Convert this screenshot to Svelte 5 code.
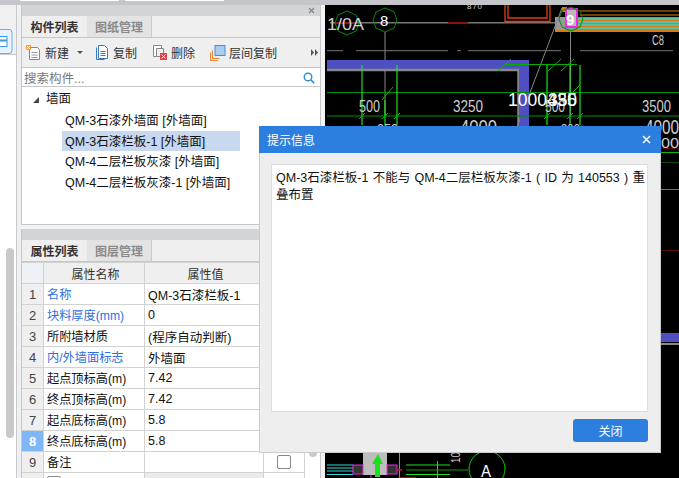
<script lang="ts">
  const tree = ['QM-3石漆外墙面 [外墙面]', 'QM-3石漆栏板-1 [外墙面]', 'QM-4二层栏板灰漆 [外墙面]', 'QM-4二层栏板灰漆-1 [外墙面]'];
  const rows = [
    { name: '名称', value: 'QM-3石漆栏板-1', link: true },
    { name: '块料厚度(mm)', value: '0', link: true },
    { name: '所附墙材质', value: '(程序自动判断)' },
    { name: '内/外墙面标志', value: '外墙面', link: true },
    { name: '起点顶标高(m)', value: '7.42' },
    { name: '终点顶标高(m)', value: '7.42' },
    { name: '起点底标高(m)', value: '5.8' },
    { name: '终点底标高(m)', value: '5.8', active: true },
    { name: '备注', value: '', check: true }
  ];
</script>

<div class="app">
  <div class="top"><i></i><i></i></div>
  <div class="work">
    <aside class="side">
      <div class="side-tab">
        <svg width="13" height="25" viewBox="0 0 13 25"><rect x="-5" y="0.500" width="17" height="24" rx="3" fill="#e6f2fd" stroke="#66aef0"/><rect x="-1" y="7.500" width="8" height="10" fill="#fff" stroke="#3f97e2"/><path d="M-1 11.500h8" stroke="#3f97e2" stroke-width="2"/></svg>
      </div>
      <div class="side-rail"><div class="rail-thumb"></div></div>
    </aside>

    <main class="panels">
      <section class="panel list">
        <div class="strip">
          <svg width="7" height="7" viewBox="0 0 7 7"><path d="M1 1l5 5M6 1l-5 5" stroke="#888" stroke-width="1.300"/></svg>
        </div>
        <div class="tabs">
          <span class="tab on">构件列表</span><span class="tab">图纸管理</span>
        </div>
        <div class="tools">
          <span class="tool">
            <svg width="16" height="16" viewBox="0 0 16 16"><path d="M3.500 2.500h8l2 2v10h-10z" fill="#fff" stroke="#888"/><path d="M5.500 7.500h6M5.500 10h6M5.500 12.500h6" stroke="#999"/><rect x="0" y="0" width="5" height="5" fill="#f5a33c"/><path d="M1 1l3 3M4 1l-3 3" stroke="#fff"/></svg>
            新建
          </span>
          <span class="caret"></span>
          <span class="tool">
            <svg width="15" height="16" viewBox="0 0 15 16"><path d="M1.500 2.500v12h8" fill="none" stroke="#3b78b8"/><path d="M3.500 0.500h6l3 3v10h-9z" fill="#fff" stroke="#3b78b8"/><path d="M5.500 6.500h5M5.500 8.500h5M5.500 10.500h5" stroke="#3b78b8"/></svg>
            复制
          </span>
          <span class="tool">
            <svg width="16" height="16" viewBox="0 0 16 16"><path d="M1.500 0.500h8v11h-8z" fill="#fff" stroke="#888"/><path d="M4.500 3.500h7v8h-7z" fill="#eee" stroke="#888"/><rect x="8" y="8" width="7" height="7" fill="#d9434a"/><path d="M9.500 9.500l4 4M13.500 9.500l-4 4" stroke="#fff"/></svg>
            删除
          </span>
          <span class="tool">
            <svg width="16" height="16" viewBox="0 0 16 16"><path d="M0.500 7.500v8h7" fill="none" stroke="#ee8433"/><path d="M2.500 5.500v8h7" fill="none" stroke="#ee8433"/><rect x="5" y="0.500" width="10" height="10" fill="#a9cdf2" stroke="#4a8bd0"/></svg>
            层间复制
          </span>
          <span class="more">
            <svg width="7" height="7" viewBox="0 0 7 7"><path d="M0 0l3 3.500-3 3.500zM4 0l3 3.500-3 3.500z" fill="#555"/></svg>
          </span>
        </div>
        <div class="search">
          <span>搜索构件...</span>
          <svg width="12" height="12" viewBox="0 0 12 12"><circle cx="5" cy="5" r="3.800" fill="none" stroke="#2f8ccf" stroke-width="1.400"/><path d="M8 8l3.200 3.200" stroke="#2f8ccf" stroke-width="1.600"/></svg>
        </div>
        <div class="tree">
          <div class="root"><i class="tri"></i>墙面</div>
          {#each tree as item, i}
            <div class="leaf" class:sel={i === 1}>{item}</div>
          {/each}
        </div>
      </section>

      <section class="panel props">
        <div class="strip"></div>
        <div class="tabs">
          <span class="tab on">属性列表</span><span class="tab">图层管理</span>
        </div>
        <div class="prop-body">
          <table>
            <colgroup><col class="c0" /><col class="c1" /><col class="c2" /><col /></colgroup>
            <thead>
              <tr><th></th><th>属性名称</th><th>属性值</th><th></th></tr>
            </thead>
            <tbody>
              {#each rows as row, i}
                <tr>
                  <td class="num" class:active={row.active}>{i + 1}</td>
                  <td class="name" class:link={row.link}>{row.name}</td>
                  <td>{row.value}</td>
                  <td class="chk">{#if row.check}<span class="box"></span>{/if}</td>
                </tr>
              {/each}
              <tr class="last">
                <td class="num"></td>
                <td><span class="box small"></span></td>
                <td class="grey"></td>
                <td></td>
              </tr>
            </tbody>
          </table>
          <div class="prop-rail"><div class="prop-thumb"></div></div>
        </div>
      </section>
    </main>

    <div class="canvas">
      <svg width="354" height="473" viewBox="325 5 354 473" font-family="'Liberation Sans', sans-serif" fill="#cfcfcf">
        <rect x="325" y="5" width="354" height="473" fill="#000"/>

        <!-- top row: axis bubbles, wall outline, beam -->
        <path d="M330 22.700h225" stroke="#777" stroke-width="1.500"/>
        <path d="M335 22.700h20M448 22.700h20" stroke="#8a1010" stroke-width="1.500"/>
        <path d="M505 5v16.500h45V5M508 5v13h39V5" fill="none" stroke="#e23d12" stroke-width="1.300"/>
        <rect x="555" y="17" width="124" height="15" fill="#d97a12"/>
        <path d="M580 11h99M580 15h99" stroke="#d97a12" stroke-width="1.200"/>
        <path d="M566 19h113M566 22h113M566 25h113M566 28h113" stroke="#2fd8d8" stroke-width="1.600"/>
        <rect x="555" y="17" width="10" height="13" fill="#999"/>
        <rect x="562" y="7" width="5" height="5" fill="#d97a12"/>
        <rect x="566" y="9" width="11" height="18" fill="#b9b9b9" stroke="#e92be0" stroke-width="2"/>
        <polygon points="347,11 356,15 359,23 356,31 347,35 338,31 335,23 338,15" fill="none" stroke="#0a8a0a"/>
        <polygon points="385,8 394,12 397,20 394,28 385,32 376,28 373,20 376,12" fill="none" stroke="#0a8a0a"/>
        <polygon points="571,7 580,11 583,19 580,27 571,31 562,27 559,19 562,11" fill="none" stroke="#0a8a0a"/>
        <path d="M385 32v84M570.500 31v85" stroke="#888"/>
        <path d="M562 8l-45 119" stroke="#888"/>
        <text x="327" y="30" font-size="17" textLength="37" lengthAdjust="spacingAndGlyphs">1/0A</text>
        <text x="380" y="26" font-size="15" fill="#fff">8</text>
        <text x="566" y="25" font-size="15" fill="#fff" font-weight="bold">9</text>
        <text x="652" y="45" font-size="15" textLength="12" lengthAdjust="spacingAndGlyphs">C8</text>
        <text x="467" y="9" font-size="8" textLength="15">870</text>

        <!-- dashed grid line and wall -->
        <path d="M327 50.700h16M356 50.700h92M457 50.700h4M468 50.700h93M570 50.700h1M580 50.700h93" stroke="#777"/>
        <rect x="327" y="60" width="202" height="9" fill="#4e4fc1"/>
        <rect x="520" y="60" width="9" height="70" fill="#4e4fc1"/>
        <path d="M327 70h191.500v60" fill="none" stroke="#888" stroke-width="2.400"/>

        <!-- dimension lines -->
        <path d="M327 92.500h352M327 116h352" stroke="#009000"/>
        <path d="M362 65v60M385 100v25M397 65v60M547 65v60M570 65v60M580 65v60" stroke="#1ee01e" stroke-width="1.200"/>
        <path d="M505 64.500h72" stroke="#00b000"/>
        <path d="M498 71l13-12M548 71l13-12M561 71l13-12M382 100l11-13M571 94l9-9M359 119l6-6M382 119l6-6M394 119l6-6M544 119l6-6M567 119l6-6M577 119l6-6" stroke="#0ab00a"/>
        <text x="359" y="112" font-size="17" textLength="21" lengthAdjust="spacingAndGlyphs">500</text>
        <text x="453" y="112" font-size="17" textLength="30" lengthAdjust="spacingAndGlyphs">3250</text>
        <text x="545" y="112" font-size="17" textLength="20" lengthAdjust="spacingAndGlyphs">500</text>
        <text x="642" y="112" font-size="17" textLength="29" lengthAdjust="spacingAndGlyphs">3500</text>
        <text x="508" y="106" font-size="18" fill="#fff" textLength="39" lengthAdjust="spacingAndGlyphs">1000</text>
        <text x="547" y="106" font-size="18" fill="#fff" textLength="30" lengthAdjust="spacingAndGlyphs">435</text>
        <text x="548" y="106" font-size="18" fill="#fff" textLength="29" lengthAdjust="spacingAndGlyphs">350</text>
        <text x="377" y="134" font-size="15" textLength="21" lengthAdjust="spacingAndGlyphs">350</text>
        <text x="460" y="134" font-size="20" textLength="37" lengthAdjust="spacingAndGlyphs">4000</text>
        <text x="561" y="134" font-size="14" textLength="19" lengthAdjust="spacingAndGlyphs">300</text>
        <text x="645" y="134" font-size="20" textLength="34" lengthAdjust="spacingAndGlyphs">4000</text>

        <!-- right of the dialog -->
        <text x="652" y="148" font-size="14" textLength="27" lengthAdjust="spacingAndGlyphs">000</text>
        <path d="M661 148.500h18" stroke="#5a0c0c"/>
        <path d="M661 152.500h18M661 189.500h18" stroke="#12b012"/>
        <path d="M661 162.500h18" stroke="#0a4a0a"/>
        <path d="M661 250.500h18" stroke="#5a0c0c"/>
        <rect x="661" y="333" width="18" height="9" fill="#4e4fc1"/>
        <rect x="661" y="343" width="18" height="2" fill="#888"/>

        <!-- below the dialog -->
        <rect x="363" y="453" width="24" height="22" fill="#bdbdbd"/>
        <path d="M327 465h26M327 468h26M327 471h26M327 474.500h26" stroke="#2fd8d8"/>
        <rect x="353" y="465" width="10" height="9" fill="#333" stroke="#e92be0"/>
        <rect x="387" y="465" width="10" height="9" fill="#333" stroke="#e92be0"/>
        <path d="M371 475v3" stroke="#e92be0"/>
        <path d="M378 454l5 10h-3v13h-5v-13h-3z" fill="#1de01d"/>
        <path d="M399.500 453v25" stroke="#1de01d"/>
        <path d="M406 465h44M406 474.500h44M437.500 461v17" stroke="#1de01d"/>
        <path d="M406 470h62" stroke="#0a9a0a"/>
        <path d="M397 470h5M398 478h18" stroke="#e01010" stroke-width="1.300"/>
        <text x="460" y="463" font-size="13" transform="rotate(-90 460 463)" textLength="11" lengthAdjust="spacingAndGlyphs">10</text>
        <circle cx="487" cy="469" r="18" fill="none" stroke="#17c317"/>
        <text x="481" y="477" font-size="16" fill="#fff" textLength="10" lengthAdjust="spacingAndGlyphs">A</text>
      </svg>
    </div>
  </div>

  <div class="dialog">
    <header class="dlg-head">
      <span>提示信息</span>
      <svg width="9" height="9" viewBox="0 0 9 9"><path d="M1 1l7 7M8 1l-7 7" stroke="#fff" stroke-width="1.500"/></svg>
    </header>
    <div class="dlg-body">
      <div class="message">QM-3石漆栏板-1 不能与 QM-4二层栏板灰漆-1 ( ID 为 140553 ) 重叠布置</div>
      <footer class="dlg-foot"><button>关闭</button></footer>
    </div>
  </div>
</div>

<style>
  :global(body) {
    margin: 0;
    background: #fff;
  }

  .app {
    position: relative;
    display: flex;
    flex-direction: column;
    width: 679px;
    height: 478px;
    overflow: hidden;
    background: #ececec;
    font: 12.500px "Liberation Sans", "Noto Sans CJK SC", sans-serif;
    color: #111;
  }

  .top {
    height: 5px;
    flex: none;
    display: flex;
    gap: 6px;
    padding-left: 20px;
    background: #c4c6ca;
  }

  .top i {
    width: 99px;
    height: 1px;
    background: #fff;
  }

  .work {
    flex: 1;
    display: flex;
    min-height: 0;
  }

  .side {
    width: 21px;
    flex: none;
    display: flex;
    flex-direction: column;
    background: #f0f0f0;
  }

  .side-tab {
    height: 50px;
    width: 17px;
    padding-top: 24px;
    box-sizing: border-box;
    border-right: 1px solid #c9cacd;
    border-bottom: 1px solid #c9cacd;
    background: #f0f0f0;
  }

  .side-tab svg {
    display: block;
  }

  .side-rail {
    flex: 1;
    width: 17px;
    box-sizing: border-box;
    border-right: 1px solid #c9cacd;
    padding: 193px 0 0 6px;
    background: #fff;
  }

  .rail-thumb {
    width: 8px;
    height: 190px;
    background: #c9c9c9;
    border-radius: 4px;
  }

  .panels {
    width: 304px;
    flex: none;
    display: flex;
    flex-direction: column;
    gap: 4px;
    background: #f4f4f4;
  }

  .panel {
    width: 300px;
    background: #fff;
    border-left: 1px solid #c4c6ca;
    border-right: 1px solid #c4c6ca;
    box-sizing: border-box;
  }

  .list {
    height: 220px;
    flex: none;
    border-bottom: 1px solid #c4c6ca;
    overflow: hidden;
  }

  .props {
    flex: 1;
    min-height: 0;
    overflow: hidden;
  }

  .strip {
    height: 11px;
    background: #d3d4d8;
    display: flex;
    justify-content: flex-end;
    align-items: center;
    padding-right: 5px;
  }

  .tabs {
    display: flex;
    height: 22px;
    box-sizing: border-box;
    background: #efefef;
    border-bottom: 1px solid #c4c6ca;
    font-size: 12px;
  }

  .tab {
    width: 65px;
    box-sizing: border-box;
    line-height: 24px;
    text-align: center;
    color: #8a8a8a;
    background: #e3e3e3;
    border-right: 1px solid #c9cacd;
    font-weight: bold;
  }

  .tab:first-child {
    background: #efefef;
    border-right: 0;
    color: #333;
  }

  .tools {
    height: 30px;
    box-sizing: border-box;
    display: flex;
    align-items: center;
    padding-left: 4px;
    gap: 15px;
    background: #efefef;
    border-bottom: 1px solid #c4c6ca;
    color: #333;
    font-size: 12px;
  }

  .tool {
    display: flex;
    align-items: center;
    gap: 3px;
  }

  .caret {
    width: 0;
    height: 0;
    margin-left: -7px;
    margin-right: -3px;
    border: 3px solid transparent;
    border-top: 3px solid #555;
    border-bottom: 0;
  }

  .more {
    margin-left: auto;
    margin-right: 2px;
    line-height: 0;
  }

  .search {
    height: 19px;
    box-sizing: border-box;
    display: flex;
    align-items: center;
    justify-content: space-between;
    padding: 1px 5px 0 2px;
    color: #777;
    border-bottom: 1px solid #c4c6ca;
  }

  .tree {
    padding-top: 2px;
  }

  .root {
    height: 21px;
    line-height: 21px;
    display: flex;
    align-items: center;
    padding-left: 11px;
    gap: 7px;
  }

  .tri {
    width: 0;
    height: 0;
    border-style: solid;
    border-width: 0 0 6px 6px;
    border-color: transparent transparent #444 transparent;
  }

  .leaf {
    width: 178px;
    height: 20.500px;
    line-height: 22px;
    margin-left: 40px;
    padding-left: 3px;
    box-sizing: border-box;
    white-space: nowrap;
  }

  .sel {
    background: #c7d8ef;
  }

  .prop-body {
    display: flex;
  }

  table {
    flex: none;
    border-collapse: collapse;
    table-layout: fixed;
    width: 284px;
    margin-left: -1px;
  }

  .c0 {
    width: 22px;
  }

  .c1 {
    width: 101px;
  }

  .c2 {
    width: 119px;
  }

  th,
  td {
    height: 21px;
    padding: 0 0 0 3px;
    border: 1px solid #d2d2d2;
    font-weight: normal;
    white-space: nowrap;
    overflow: hidden;
    box-sizing: border-box;
  }

  th {
    background: #efefef;
    color: #333;
    text-align: center;
    font-size: 12px;
  }

  th:first-child {
    background: #eef1f5;
  }

  .num {
    background: #efefef;
    text-align: center;
    padding: 0;
    color: #444;
    font-size: 13px;
  }

  .num.active {
    background: #7fb6f6;
    color: #fff;
    font-weight: bold;
  }

  .name {
    font-size: 12.200px;
  }

  .link {
    color: #2f6fe0;
  }

  .chk {
    text-align: center;
    padding: 0;
  }

  .box {
    display: inline-block;
    width: 12px;
    height: 12px;
    border: 1px solid #888;
    border-radius: 2px;
    vertical-align: middle;
  }

  .last td {
    vertical-align: top;
  }

  .box.small {
    margin: 3px 0 0 0;
  }

  .grey {
    background: #ebebeb;
  }

  .prop-rail {
    flex: 1;
    padding: 40px 0 0 4px;
  }

  .prop-thumb {
    width: 8px;
    height: 155px;
    background: #c9c9c9;
    border-radius: 4px;
  }

  .canvas {
    flex: 1;
    line-height: 0;
  }

  .canvas svg {
    display: block;
  }

  .dialog {
    position: absolute;
    left: 259px;
    top: 126px;
    width: 402px;
    height: 327px;
    box-sizing: border-box;
    display: flex;
    flex-direction: column;
    background: #eee;
    border: 1px solid #c9cacd;
    border-top: 0;
  }

  .dlg-head {
    height: 27px;
    flex: none;
    margin: 0 -1px;
    padding: 0 10px 0 8px;
    display: flex;
    align-items: center;
    justify-content: space-between;
    background: #2d7fdf;
    color: #fff;
    font-size: 12px;
  }

  .dlg-body {
    flex: 1;
    display: flex;
    flex-direction: column;
    padding: 11px 12px 10px 11px;
    gap: 7px;
  }

  .message {
    flex: 1;
    padding: 5px 1px 5px 4px;
    background: #fff;
    border: 1px solid #dcdde0;
    line-height: 17px;
    word-spacing: 0.800px;
  }

  .dlg-foot {
    display: flex;
    justify-content: flex-end;
  }

  button {
    width: 75px;
    height: 23px;
    border: 0;
    border-radius: 3px;
    background: #2d7fdf;
    color: #fff;
    font-family: inherit;
    font-size: 12px;
  }
</style>
